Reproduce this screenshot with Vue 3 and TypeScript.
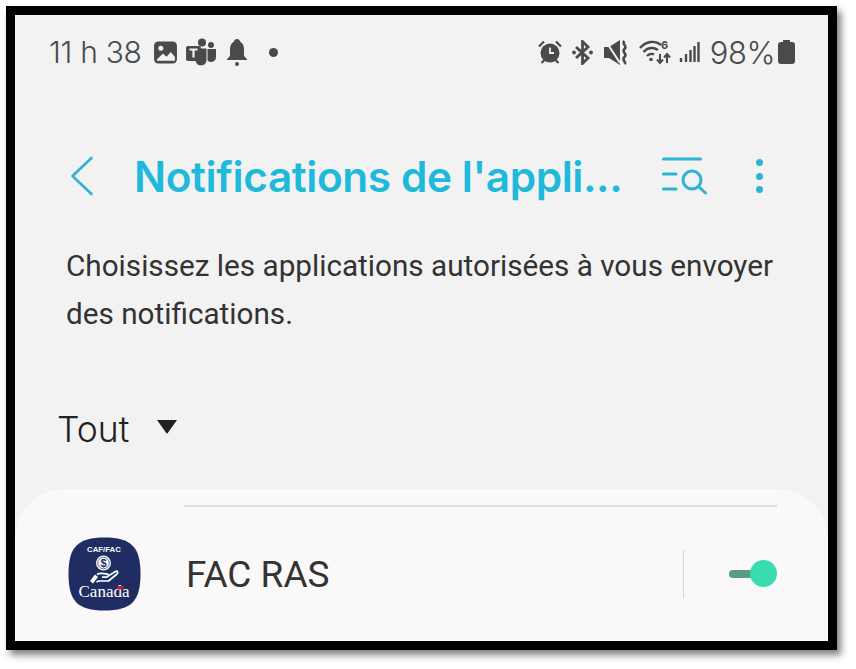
<template>
  <div class="page">
    <div class="phone">
      <div class="status-bar">
        <div class="status-left">
          <span class="clock">11 h 38</span>
          <!-- gallery -->
          <svg class="ic" style="margin-left:11px" width="25" height="25" viewBox="0 0 24 24">
            <rect x="1" y="1.5" width="22" height="21" rx="4" fill="#4a4a4a" />
            <circle cx="7.5" cy="8" r="2.4" fill="#f2f2f2" />
            <path d="M3.5 19 L9.5 13 L13 16 L17 11.5 L21 16 V20 H4 Z" fill="#f2f2f2" />
          </svg>
          <!-- teams -->
          <svg class="ic" style="margin-left:8px" width="31" height="28" viewBox="0 0 31 28">
            <circle cx="16" cy="4.5" r="4" fill="#4a4a4a" />
            <circle cx="25" cy="7" r="3" fill="#4a4a4a" />
            <path d="M20 11 H30 V19 A5 5 0 0 1 21 22 Z" fill="#4a4a4a" />
            <path d="M9 10 H21 V22 A6 6 0 0 1 9 22 Z" fill="#4a4a4a" stroke="#f2f2f2" stroke-width="1" />
            <rect x="0" y="8" width="15" height="15" rx="2" fill="#4a4a4a" />
            <path d="M3.5 11.5 H11.5 M7.5 11.5 V19.5" stroke="#f2f2f2" stroke-width="2.2" fill="none" />
          </svg>
          <!-- bell -->
          <svg class="ic" style="margin-left:9px" width="22" height="28" viewBox="0 0 22 28">
            <path d="M11 1 C13 1 14 2.5 14 3.5 C17 5 18 8 18 12 V18 L21 21 V22 H1 V21 L4 18 V12 C4 8 5 5 8 3.5 C8 2.5 9 1 11 1 Z" fill="#4a4a4a" />
            <circle cx="11" cy="26" r="2" fill="#4a4a4a" />
          </svg>
          <span class="dot"></span>
        </div>
        <div class="status-right">
          <!-- alarm -->
          <svg width="24" height="24" viewBox="0 0 24 24">
            <circle cx="12" cy="13" r="9.500" fill="#4a4a4a" />
            <path d="M12 7.5 V13 H16" stroke="#f2f2f2" stroke-width="1.8" fill="none" />
            <path d="M1 6.500 L6 1.500 M23 6.500 L18 1.500 M3.500 23 L6.500 20 M20.500 23 L17.500 20" stroke="#4a4a4a" stroke-width="2.200" fill="none" />
          </svg>
          <!-- bluetooth -->
          <svg style="margin-left:10px" width="21" height="25" viewBox="0 0 21 25">
            <path d="M4 7 L16 18 L10.5 23.500 V1.500 L16 7 L4 18" stroke="#4a4a4a" stroke-width="2.800" fill="none" />
            <circle cx="2" cy="12.500" r="1.900" fill="#4a4a4a" />
            <circle cx="19" cy="12.500" r="1.900" fill="#4a4a4a" />
          </svg>
          <!-- mute -->
          <svg style="margin-left:11px" width="24" height="25" viewBox="0 0 24 25">
            <path d="M0 7 H5 L16 0 V25 L5 18 H0 Z" fill="#4a4a4a" />
            <path d="M1 0 L16 23" stroke="#f2f2f2" stroke-width="2" />
            <path d="M20.500 1 C17 4 24 6 20.500 9 C17 12 24 14 20.500 17 C17 20 23 22 20.500 24" stroke="#4a4a4a" stroke-width="2.600" fill="none" />
          </svg>
          <!-- wifi -->
          <svg style="margin-left:11px" width="32" height="26" viewBox="0 0 32 26">
            <path d="M1 9 C7 2 16 1 22 6 M4.500 13 C9 8 15 8 19 11 M8 17 C10.500 14.500 13.500 14.500 15 15.500" stroke="#4a4a4a" stroke-width="2.400" fill="none" />
            <circle cx="12" cy="20.500" r="1.800" fill="#4a4a4a" />
            <path d="M21 15 V24 M18 20.500 L21 24 L24 20.500 M28 24 V15 M25 18.500 L28 15 L31 18.500" stroke="#4a4a4a" stroke-width="2" fill="none" />
            <text x="22" y="10" class="six">6</text>
          </svg>
          <!-- signal -->
          <svg style="margin-left:8px" width="21" height="22" viewBox="0 0 21 22">
            <path d="M2 21 V17 M7 21 V13 M11.500 21 V9 M15.500 21 V5 M19.500 21 V1" stroke="#4a4a4a" stroke-width="2.400" fill="none" />
          </svg>
          <span class="battery-text">98%</span>
          <!-- battery -->
          <svg style="margin-left:3px" width="17" height="24" viewBox="0 0 17 24">
            <path d="M5 0 H12 V2 H14 A3 3 0 0 1 17 5 V21 A3 3 0 0 1 14 24 H3 A3 3 0 0 1 0 21 V5 A3 3 0 0 1 3 2 H5 Z" fill="#4a4a4a" />
          </svg>
        </div>
      </div>

      <div class="app-bar">
        <svg class="back" width="24" height="40" viewBox="0 0 24 40">
          <path d="M21.500 2 L2.500 20 L21.500 38" stroke="#2bb5d3" stroke-width="2.600" stroke-linecap="round" stroke-linejoin="round" fill="none" />
        </svg>
        <h1 class="title">Notifications de l'appli...</h1>
        <svg class="search" width="46" height="38" viewBox="0 0 46 38">
          <path d="M1.500 2 H38.500 M1.500 17 H14 M1.500 32 H14" stroke="#2bb5d3" stroke-width="3" stroke-linecap="round" fill="none" />
          <circle cx="30" cy="23" r="9" stroke="#2bb5d3" stroke-width="3" fill="none" />
          <path d="M37 30 L43.500 36" stroke="#2bb5d3" stroke-width="3" stroke-linecap="round" />
        </svg>
        <div class="more">
          <span></span><span></span><span></span>
        </div>
      </div>

      <p class="intro">Choisissez les applications autorisées à vous envoyer des notifications.</p>

      <div class="filter">
        <span>Tout</span>
        <i class="caret"></i>
      </div>

      <div class="card">
        <div class="rule"></div>
        <div class="row">
          <div class="app-icon">
            <svg width="73" height="74" viewBox="0 0 72 74">
              <path d="M36 0.500 C63 0.500 72 10 72 37 C72 64 63 73.500 36 73.500 C9 73.500 0 64 0 37 C0 10 9 0.500 36 0.500 Z" fill="#1f2d63" />
              <text x="35.500" y="15" text-anchor="middle" class="caf">CAF/FAC</text>
              <circle cx="35" cy="26" r="7.500" fill="#fff" />
              <circle cx="35" cy="26" r="5.800" fill="none" stroke="#1f2d63" stroke-width="0.700" />
              <text x="35" y="30" text-anchor="middle" class="dollar">$</text>
              <!-- hand: cuff plus open palm -->
              <path d="M21.500 44 L26.500 37.500 L29.500 40 L24.500 46.500 Z" fill="#fff" />
              <path d="M28.500 37.500 C31 35.500 34 36.500 38 36.800 C40.500 37 40.500 40 38 40.200 H33.500 M39 39.500 L47 34.500 C49 33.500 50 35.500 48.500 37 L40 44 H30 L28 45" stroke="#fff" stroke-width="1.700" fill="none" stroke-linejoin="round" />
              <text x="35.500" y="60" text-anchor="middle" class="canada">Canada</text>
              <rect x="49" y="49" width="6" height="3.500" fill="#b3262e" />
            </svg>
          </div>
          <span class="app-name">FAC RAS</span>
          <div class="sep"></div>
          <div class="toggle">
            <span class="track"></span>
            <span class="knob"></span>
          </div>
        </div>
      </div>
    </div>
  </div>
</template>

<script setup lang="ts">
</script>

<style>
html,
body {
  margin: 0;
  background: #fff;
}
</style>

<style scoped>
.page {
  width: 856px;
  height: 669px;
  padding: 6px 0 0 6px;
  box-sizing: border-box;
  overflow: hidden;
}

.phone {
  width: 813px;
  height: 626px;
  border: 9px solid #000;
  background: #f2f2f2;
  box-shadow: 4px 5px 7px rgba(0, 0, 0, 0.5);
  font-family: Roboto, "Liberation Sans", sans-serif;
  overflow: hidden;
  display: flex;
  flex-direction: column;
}

.status-bar {
  height: 50px;
  margin-top: 12px;
  padding: 0 33px 0 34px;
  display: flex;
  align-items: center;
  justify-content: space-between;
  color: #4a4a4a;
}

.status-left,
.status-right {
  display: flex;
  align-items: center;
}

.clock {
  font-family: Inter, sans-serif;
  font-size: 30px;
  font-weight: 300;
  letter-spacing: -0.3px;
}

.battery-text {
  margin-left: 10px;
  font-family: Inter, sans-serif;
  font-size: 31px;
  font-weight: 300;
  letter-spacing: -0.5px;
}

.dot {
  width: 9px;
  height: 9px;
  margin-left: 21px;
  border-radius: 50%;
  background: #4a4a4a;
}

.six {
  font-family: Inter, sans-serif;
  font-size: 11px;
  font-weight: 700;
  fill: #4a4a4a;
}

.app-bar {
  display: flex;
  align-items: center;
  height: 62px;
  margin-top: 68px;
  padding-left: 55px;
}

.title {
  margin: 0 0 0 40px;
  width: 488px;
  font-family: Inter, sans-serif;
  font-size: 42.300px;
  font-weight: 600;
  letter-spacing: -0.4px;
  color: #1fb9dc;
  white-space: nowrap;
}

.search {
  margin-left: 40px;
}

.more {
  display: flex;
  flex-direction: column;
  gap: 6.500px;
  margin-left: 48px;
}

.more span {
  width: 7px;
  height: 7px;
  border-radius: 50%;
  background: #2bb5d3;
}

.intro {
  margin: 35px 30px 0 51px;
  font-size: 29.700px;
  line-height: 48px;
  color: #333;
}

.filter {
  display: flex;
  align-items: center;
  margin-top: 66px;
  padding-left: 42px;
  height: 50px;
  font-family: Inter, sans-serif;
  font-size: 35.500px;
  font-weight: 300;
  color: #222;
}

.caret {
  width: 0;
  height: 0;
  margin-left: 28px;
  margin-bottom: 4px;
  border-left: 10px solid transparent;
  border-right: 10px solid transparent;
  border-top: 14px solid #222;
}

.card {
  flex: 1;
  margin-top: 35px;
  padding: 16px 51px 0 53px;
  background: #faf8f9;
  border-radius: 50px 50px 0 0;
}

.rule {
  height: 2px;
  margin-left: 116px;
  background: #dcdcdc;
}

.row {
  display: flex;
  align-items: center;
  margin-top: 30px;
  height: 74px;
}

.app-icon {
  width: 73px;
  height: 74px;
}

.caf {
  font-family: "Liberation Sans", sans-serif;
  font-size: 7.800px;
  font-weight: 700;
  fill: #fff;
}

.dollar {
  font-family: "Liberation Sans", sans-serif;
  font-size: 11px;
  font-weight: 700;
  fill: #1f2d63;
}

.canada {
  font-family: "Liberation Serif", serif;
  font-size: 17px;
  fill: #fff;
}

.app-name {
  margin-left: 45px;
  flex: 1;
  font-size: 37px;
  color: #333;
}

.sep {
  width: 1px;
  height: 48px;
  background: #d8d8d8;
}

.toggle {
  position: relative;
  width: 48px;
  height: 28px;
  margin-left: 45px;
}

.track {
  position: absolute;
  left: 0;
  top: 10px;
  width: 32px;
  height: 8px;
  border-radius: 4px;
  background: #5b9a86;
}

.knob {
  position: absolute;
  right: 0;
  top: 0;
  width: 27px;
  height: 27px;
  border-radius: 50%;
  background: #38dcae;
}
</style>
